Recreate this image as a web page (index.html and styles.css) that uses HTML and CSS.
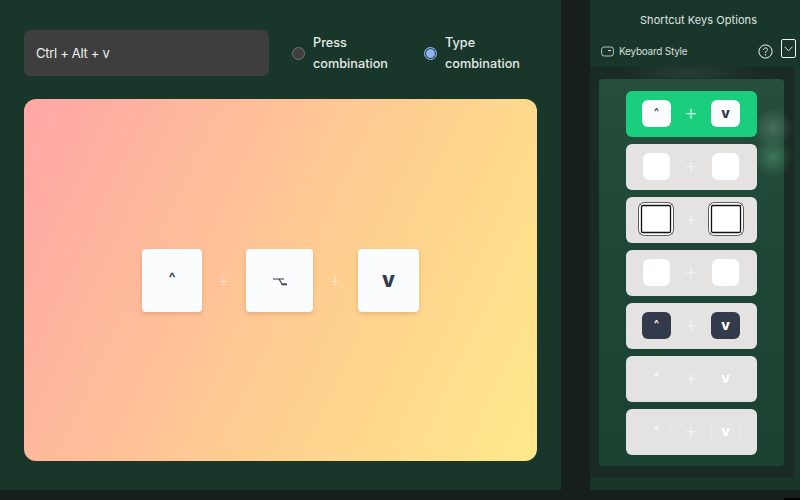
FILE: index.html
```html
<!DOCTYPE html>
<html lang="en">
<head>
<meta charset="utf-8">
<title>Shortcut Keys Options</title>
<link rel="stylesheet" href="styles.css">
</head>
<body>
<div class="app">
  <main class="main">
    <div class="top">
      <div class="field">Ctrl + Alt + v</div>
      <div class="option opt-press"><span class="radio"></span><span class="label">Press combination</span></div>
      <div class="option opt-type"><span class="radio on"></span><span class="label">Type combination</span></div>
    </div>
    <div class="preview">
      <div class="bigkey k1"><span class="caret">^</span></div>
      <span class="bigplus first">+</span>
      <div class="bigkey k2"><svg width="15" height="9" viewBox="0 0 15 9"><path d="M1 2H12M7 2l3 5" fill="none" stroke="#333a4c" stroke-width="1.200"/><path d="M9.500 7.300H15" fill="none" stroke="#333a4c" stroke-width="1.800"/></svg></div>
      <span class="bigplus">+</span>
      <div class="bigkey k3"><span class="vee">v</span></div>
    </div>
  </main>
  <aside class="side">
    <h1 class="title">Shortcut Keys Options</h1>
    <div class="stylebar">
      <svg class="kbd-ico" width="13" height="11" viewBox="0 0 13 11"><rect x=".6" y="1" width="11.800" height="9" rx="2.600" fill="none" stroke="#c9d2cd" stroke-width=".9"/><path d="M7 4.600h3" stroke="#dfe5e2" stroke-width="1"/></svg>
      <span class="style-name">Keyboard Style</span>
      <svg class="help" width="15" height="15" viewBox="0 0 15 15"><circle cx="7.500" cy="7.500" r="6.600" fill="none" stroke="#f2f4f3" stroke-width="1"/><path d="M5.600 5.800c0-2.500 3.900-2.500 3.900-.2 0 1.500-2 1.500-2 3.300" fill="none" stroke="#f2f4f3" stroke-width="1"/><circle cx="7.500" cy="10.800" r=".7" fill="#f2f4f3"/></svg>
      <span class="select"><svg width="9" height="6" viewBox="0 0 9 6"><path d="M.6.8l3.900 4 3.900-4" fill="none" stroke="#f2f4f3" stroke-width=".9"/></svg></span>
    </div>
    <div class="well">
      <div class="list">
        <div class="card green"><span class="key white"><b class="c">^</b></span><span class="plus">+</span><span class="key white"><b class="v">v</b></span></div>
        <div class="card"><span class="key plain"></span><span class="plus">+</span><span class="key plain"></span></div>
        <div class="card"><svg class="bevel" width="36" height="34" viewBox="0 0 36 34"><rect x=".5" y=".5" width="35" height="33" rx="6" fill="#fff" stroke="#333" stroke-width=".8"/><rect x="3.500" y="3.500" width="29" height="27" rx="1.500" fill="#fff" stroke="#111" stroke-width="1.300"/><path d="M1.500 1.800 3.500 3.500M34.500 1.800 32.500 3.500M1.500 32.200 3.500 30.500M34.500 32.200 32.500 30.500" stroke="#333" stroke-width=".8"/></svg><span class="plus">+</span><svg class="bevel" width="36" height="34" viewBox="0 0 36 34"><rect x=".5" y=".5" width="35" height="33" rx="6" fill="#fff" stroke="#333" stroke-width=".8"/><rect x="3.500" y="3.500" width="29" height="27" rx="1.500" fill="#fff" stroke="#111" stroke-width="1.300"/><path d="M1.500 1.800 3.500 3.500M34.500 1.800 32.500 3.500M1.500 32.200 3.500 30.500M34.500 32.200 32.500 30.500" stroke="#333" stroke-width=".8"/></svg></div>
        <div class="card"><span class="key plain"></span><span class="plus">+</span><span class="key plain"></span></div>
        <div class="card"><span class="key dark"><b class="c">^</b></span><span class="plus">+</span><span class="key dark"><b class="v">v</b></span></div>
        <div class="card"><span class="key ghost"><b class="c">^</b></span><span class="plus">+</span><span class="key ghost"><b class="v">v</b></span></div>
        <div class="card"><span class="key ghost line"><b class="c">^</b></span><span class="plus">+</span><span class="key ghost line"><b class="v">v</b></span></div>
      </div>
    </div>
  </aside>
</div>
<div class="corner"></div>
</body>
</html>
```
FILE: styles.css
```css
* { box-sizing: border-box; }
html, body { margin: 0; height: 100%; }
body { background: #171f1c; overflow: hidden; font-family: Inter, "Liberation Sans", sans-serif; }
.app { display: flex; width: 800px; height: 490px; gap: 29px; }
.corner { width: 16px; height: 2px; margin: 8px 0 0 784px; background: #000; }

.main { width: 561px; background: #19362a; padding: 30px 24px 29px; display: flex; flex-direction: column; gap: 23px; }
.top { display: flex; align-items: center; height: 46px; }
.field { width: 245px; height: 46px; border-radius: 6px; background: #3e3e3e; color: #eef0ef; font-size: 13px; letter-spacing: -.3px; line-height: 47px; padding-left: 12px; }
.option { display: flex; align-items: center; gap: 8px; color: #e4ebe7; font-size: 12.700px; font-weight: 500; line-height: 21px; }
.opt-press { margin-left: 23px; width: 132px; }
.label { width: 80px; }
.radio { flex: none; width: 13px; height: 13px; border-radius: 50%; background: #3e3e3e; border: 1px solid #6e7671; }
.radio.on { background: #8fb4f0; border: 1px solid #8fb4f0; box-shadow: inset 0 0 0 1px #19362a; }

.preview { flex: 1; border-radius: 12px; background: linear-gradient(115deg, #ffa6a6 0%, #fed08f 60%, #ffe88a 100%); display: flex; align-items: center; justify-content: center; }
.bigkey { height: 63px; background: #fbfcfe; border-radius: 4px; box-shadow: 0 2px 4px rgba(170,110,70,.3); display: flex; align-items: center; justify-content: center; color: #333a4c; }
.k1 { width: 60px; }
.k2 { width: 67px; }
.k3 { width: 61px; }
.caret { font-size: 15px; font-weight: 600; position: relative; top: -3px; }
.vee { font-size: 21px; font-weight: 800; position: relative; top: -1px; }
.k2 svg { position: relative; top: 1px; }
.bigplus { width: 45px; text-align: center; color: rgba(255,255,255,.6); font-size: 15px; font-weight: 300; }
.bigplus.first { width: 44px; }

.side { flex: 1; background: #19362a; display: flex; flex-direction: column; }
.title { margin: 0; height: 36px; padding: 13px 0 0 7px; font-size: 11px; font-weight: 400; text-align: center; color: #dfe6e2; line-height: 14px; letter-spacing: .05px; }
.stylebar { display: flex; align-items: center; height: 30px; margin-bottom: 1px; padding-left: 11px; color: #d6dedb; font-size: 10px; letter-spacing: -.25px; }
.kbd-ico { margin-right: 5px; }
.help { margin-left: auto; }
.select { width: 15px; height: 19px; margin: 0 4px 5px 8px; border: 1px solid #f2f4f3; border-radius: 2px; display: flex; align-items: center; justify-content: center; }

.well { flex: none; height: 411px; background-color: #1a2b23; background-image: radial-gradient(circle at 183px 61px, rgba(150,190,165,.3), transparent 20px), radial-gradient(circle at 183px 90px, rgba(90,170,130,.4), transparent 20px), radial-gradient(ellipse 70px 12px at 100px 6px, rgba(70,110,90,.3), transparent); margin-right: 6px; padding: 12px 10px 12px 9px; display: flex; }
.list { flex: 1; background-image: radial-gradient(circle at 174px 49px, rgba(150,190,165,.3), transparent 20px), radial-gradient(circle at 174px 78px, rgba(90,170,130,.45), transparent 20px), linear-gradient(#264e3c, #1e4634 45%, #1b4231); border-radius: 4px; padding: 12px 27px 11px; display: flex; flex-direction: column; gap: 7.400px; }
.card { height: 45.600px; background: #e4e3e1; border-radius: 6px; display: flex; align-items: center; justify-content: space-between; padding: 0 17px 0 16px; }
.green { background: #19ce7c; }
.plus { color: rgba(255,255,255,.55); font-size: 22px; line-height: 1; font-weight: 300; margin-top: -3px; }
.green .plus { color: rgba(255,255,255,.75); }
.key { width: 29px; height: 27px; border-radius: 6px; display: flex; align-items: center; justify-content: center; }
.c { font-size: 10px; font-weight: 700; position: relative; top: -3px; }
.v { font-size: 14px; font-weight: 800; position: relative; top: -1px; }
.white { background: #fbfcfe; color: #333a4c; }
.plain { background: #fff; width: 27px; margin: 0 1px; }
.dark { background: #333a4c; color: #fff; }
.ghost { color: #fff; }
.line { border: 1px solid #e9e8e6; }
.bevel { flex: none; margin: -1px -4px 0; }
```
